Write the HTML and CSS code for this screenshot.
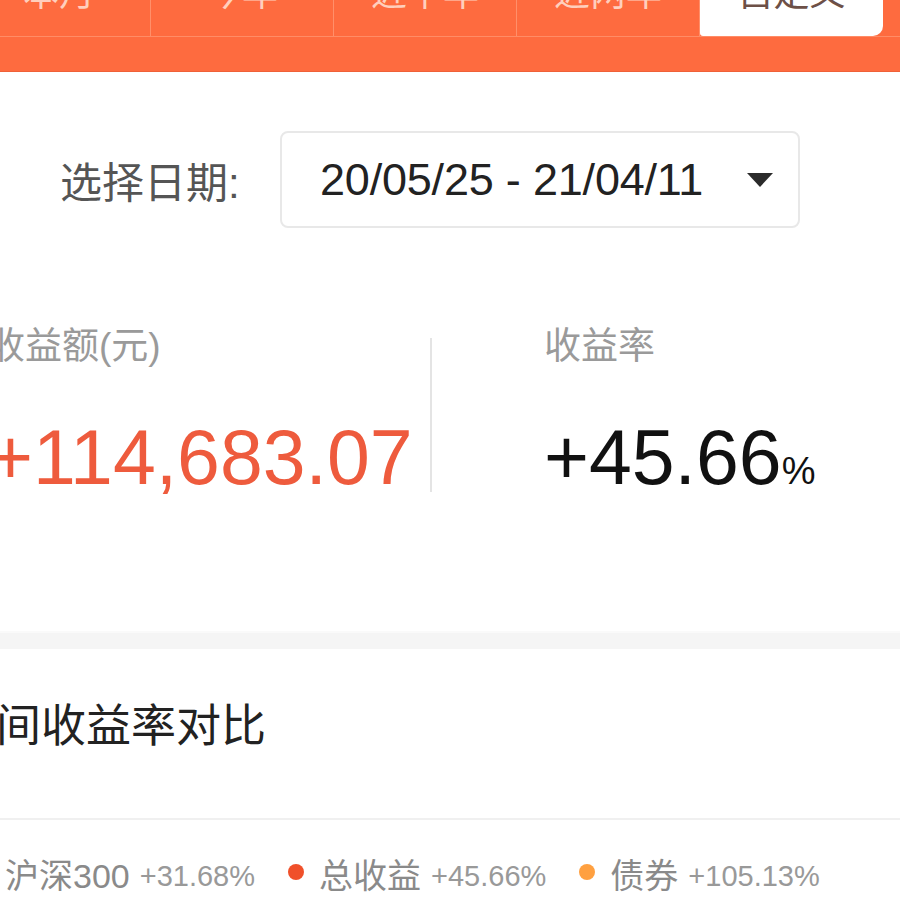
FILE: index.html
```html
<!DOCTYPE html>
<html lang="zh-CN">
<head>
    <meta charset="UTF-8">
    <meta name="viewport" content="width=device-width, initial-scale=1.0">
    <title>收益分析</title>
    <link rel="stylesheet" href="styles.css">
</head>
<body>

    <div class="page">
        <div class="top-bar">
            <div class="tabs">
                <div class="tab">本月</div>
                <div class="tab">今年</div>
                <div class="tab">近半年</div>
                <div class="tab">近两年</div>
                <div class="tab active">自定义</div>
            </div>
        </div>

        <div class="date-row">
            <span class="date-label">选择日期:</span>
            <div class="date-picker">
                <span class="date-value">20/05/25 - 21/04/11</span>
                <span class="caret"></span>
            </div>
        </div>

        <div class="stats">
            <div class="stat stat-amount">
                <div class="stat-label">收益额(元)</div>
                <div class="stat-value up">+114,683.07</div>
            </div>
            <div class="stat-divider"></div>
            <div class="stat stat-rate">
                <div class="stat-label">收益率</div>
                <div class="stat-value">+45.66<span class="unit">%</span></div>
            </div>
        </div>

        <div class="spacer"></div>

        <h2 class="section-title">区间收益率对比</h2>

        <div class="legend">
            <div class="legend-item">
                <span class="dot dot-index"></span>
                <span class="legend-name">沪深300</span>
                <span class="legend-value">+31.68%</span>
            </div>
            <div class="legend-item">
                <span class="dot dot-total"></span>
                <span class="legend-name">总收益</span>
                <span class="legend-value">+45.66%</span>
            </div>
            <div class="legend-item">
                <span class="dot dot-bond"></span>
                <span class="legend-name">债券</span>
                <span class="legend-value">+105.13%</span>
            </div>
        </div>
    </div>

</body>
</html>
```

FILE: styles.css
```css
body {
    margin: 0;
    background-color: #fff;
    font-family: "Liberation Sans", "Noto Sans CJK SC", sans-serif;
    overflow: hidden;
}
.page {
    width: 900px;
    height: 900px;
    overflow: hidden;
}

/* orange header with period tabs */
.top-bar {
    background-color: #fe6b3f;
    height: 117px;
    margin-top: -45px;
    border-bottom: 1px solid #ef6138;
    box-sizing: border-box;
}
.tabs {
    display: flex;
    height: 82px;
    margin-left: -32px;
    border-bottom: 1px solid #ff8c66;
    box-sizing: border-box;
}
.tab {
    flex: 0 0 183px;
    box-sizing: border-box;
    border-right: 1px solid #ff8f6a;
    display: flex;
    align-items: center;
    justify-content: center;
    padding-bottom: 12px;
    font-size: 36px;
    color: #ffcfbd;
}
.tab.active {
    background-color: #fff;
    color: #6d5047;
    border-right: none;
    border-radius: 0 0 10px 3px;
}

/* date selector */
.date-row {
    display: flex;
    align-items: center;
    margin-top: 59px;
    padding-left: 60px;
}
.date-label {
    width: 220px;
    font-size: 42px;
    color: #555;
}
.date-picker {
    width: 520px;
    height: 97px;
    box-sizing: border-box;
    border: 2px solid #e8e8e8;
    border-radius: 8px;
    display: flex;
    align-items: center;
    padding-left: 38px;
}
.date-value {
    font-size: 45px;
    letter-spacing: -0.2px;
    color: #222;
}
.caret {
    margin-left: auto;
    margin-right: 25px;
    width: 0;
    height: 0;
    border-left: 13px solid transparent;
    border-right: 13px solid transparent;
    border-top: 14px solid #2b2b2b;
}

/* summary numbers */
.stats {
    display: flex;
    margin-top: 99px;
}
.stat-amount {
    width: 442px;
    margin-left: -12px;
}
.stat-rate {
    padding-left: 112px;
}
.stat-label {
    font-size: 37px;
    line-height: 40px;
    color: #9a9a9a;
}
.stat-value {
    margin-top: 50px;
    font-size: 77px;
    line-height: 80px;
    color: #111;
}
.stat-value.up {
    color: #ee5b3d;
}
.unit {
    font-size: 38px;
}
.stat-divider {
    width: 2px;
    height: 154px;
    margin-top: 11px;
    background-color: #e4e4e4;
}

.spacer {
    height: 16px;
    margin-top: 120px;
    border-top: 2px solid #fafafa;
    background-color: #f5f5f5;
}

/* comparison section */
.section-title {
    margin: 53px 0 0 -49px;
    font-size: 45px;
    line-height: 50px;
    font-weight: normal;
    color: #222;
}
.legend {
    display: flex;
    gap: 33px;
    margin-top: 66px;
    margin-left: -26px;
    padding-top: 36px;
    border-top: 2px solid #f0f0f0;
    line-height: 40px;
}
.legend-item {
    display: flex;
    align-items: center;
}
.dot {
    width: 16px;
    height: 16px;
    border-radius: 50%;
    margin-right: 15px;
    margin-top: -8px;
}
.dot-index {
    background-color: #4a90e2;
}
.dot-total {
    background-color: #f0502a;
}
.dot-bond {
    background-color: #ffa040;
}
.legend-name {
    font-size: 34px;
    color: #8a8a8a;
    margin-right: 10px;
}
.legend-value {
    font-size: 29px;
    color: #999;
}
```
